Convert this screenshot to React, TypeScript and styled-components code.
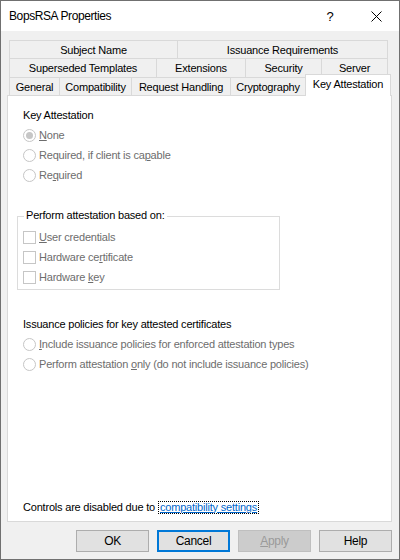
import React from 'react';
import styled, { createGlobalStyle } from 'styled-components';

const Global = createGlobalStyle`
  html, body { margin: 0; padding: 0; background: #ffffff; }
  body {
    font-family: "Liberation Sans", Arial, sans-serif;
    font-size: 11px;
    letter-spacing: -0.2px;
    color: #000;
  }
  * { box-sizing: border-box; }
`;

const Window = styled.div`
  width: 400px;
  height: 560px;
  border: 1px solid #707070;
  display: flex;
  flex-direction: column;
  background: #f0f0f0;
`;

const TitleBar = styled.div`
  height: 30px;
  flex: none;
  background: #ffffff;
  display: flex;
  align-items: center;
  padding-left: 8px;
`;

const TitleText = styled.div`
  flex: 1;
  font-size: 12px;
  letter-spacing: -0.4px;
  line-height: 16px;
`;

const TitleButton = styled.div`
  width: 46px;
  height: 30px;
  display: flex;
  align-items: center;
  justify-content: center;
  font-size: 13px;
  letter-spacing: 0;
  color: #000;
`;

const Body = styled.div`
  flex: 1;
  display: flex;
  flex-direction: column;
  padding: 9px 7px 0 6px;
`;

const TabStrip = styled.div`
  margin-left: 2px;
  width: 379px;
  display: flex;
  flex-direction: column;
`;

const TabRow = styled.div<{ $h: number }>`
  display: flex;
  align-items: flex-start;
  height: ${(p) => p.$h}px;
`;

const Tab = styled.div<{ $w: number; $h: number; $active?: boolean }>`
  flex: none;
  width: ${(p) => p.$w}px;
  height: ${(p) => (p.$active ? p.$h + 4 : p.$h)}px;
  margin-top: ${(p) => (p.$active ? -3 : 0)}px;
  border-top: 1px solid #d9d9d9;
  border-left: 1px solid #d9d9d9;
  border-right: ${(p) => (p.$active ? '1px solid #d9d9d9' : 'none')};
  background: ${(p) => (p.$active ? '#ffffff' : '#f0f0f0')};
  position: ${(p) => (p.$active ? 'relative' : 'static')};
  z-index: ${(p) => (p.$active ? 2 : 'auto')};
  display: flex;
  justify-content: center;
  padding-top: 2px;
  line-height: 15px;
  white-space: nowrap;
  &:last-child {
    border-right: 1px solid #d9d9d9;
  }
`;

const Panel = styled.div`
  width: 385px;
  height: 427px;
  flex: none;
  background: #ffffff;
  border: 1px solid #d9d9d9;
  display: flex;
  flex-direction: column;
  padding: 9px 0 4px 0;
`;

const Section = styled.div`
  padding-left: 15px;
  display: flex;
  flex-direction: column;
`;

const Heading = styled.div<{ $mt?: number }>`
  height: 20px;
  line-height: 20px;
  margin-top: ${(p) => p.$mt ?? 0}px;
  color: #000;
`;

const OptionRow = styled.div`
  height: 20px;
  display: flex;
  align-items: center;
  gap: 3px;
  color: #6d6d6d;
  white-space: nowrap;
`;

const Radio = styled.span<{ $checked?: boolean }>`
  width: 13px;
  height: 13px;
  flex: none;
  border-radius: 50%;
  border: 1px solid #c6c6c6;
  background: #ffffff;
  display: flex;
  align-items: center;
  justify-content: center;
  &::after {
    content: '';
    display: ${(p) => (p.$checked ? 'block' : 'none')};
    width: 7px;
    height: 7px;
    border-radius: 50%;
    background: #c6c6c6;
  }
`;

const Check = styled.span`
  width: 13px;
  height: 13px;
  flex: none;
  border: 1px solid #c6c6c6;
  background: #ffffff;
`;

const Key = styled.span`
  text-decoration: underline;
`;

const GroupBox = styled.div`
  position: relative;
  margin: 31px 0 0 9px;
  width: 263px;
  height: 74px;
  border: 1px solid #dcdcdc;
  padding: 10px 0 0 5px;
  display: flex;
  flex-direction: column;
`;

const GroupLabel = styled.span`
  position: absolute;
  top: -9px;
  left: 6px;
  padding: 0 2px;
  line-height: 15px;
  background: #ffffff;
  color: #000;
`;

const Note = styled.div`
  margin-top: auto;
  padding-left: 15px;
  height: 20px;
  display: flex;
  align-items: center;
  white-space: nowrap;
`;

const Link = styled.span`
  margin-left: 3px;
  color: #0066cc;
  text-decoration: underline;
  border: 1px dotted #000;
  padding: 0 1px;
  line-height: 11px;
`;

const ButtonRow = styled.div`
  margin-top: 8px;
  display: flex;
  justify-content: flex-end;
  gap: 8px;
`;

const Button = styled.div<{ $variant?: 'default' | 'disabled' }>`
  width: 73px;
  height: 22px;
  display: flex;
  align-items: center;
  justify-content: center;
  font-size: 12px;
  letter-spacing: -0.3px;
  background: ${(p) => (p.$variant === 'disabled' ? '#cccccc' : '#e1e1e1')};
  border: ${(p) =>
    p.$variant === 'default'
      ? '2px solid #0078d7'
      : p.$variant === 'disabled'
      ? '1px solid #bfbfbf'
      : '1px solid #adadad'};
  color: ${(p) => (p.$variant === 'disabled' ? '#9a9a9a' : '#000')};
`;

const tabRows: { h: number; tabs: { label: string; w: number; active?: boolean }[] }[] = [
  {
    h: 18,
    tabs: [
      { label: 'Subject Name', w: 168 },
      { label: 'Issuance Requirements', w: 211 },
    ],
  },
  {
    h: 19,
    tabs: [
      { label: 'Superseded Templates', w: 147 },
      { label: 'Extensions', w: 89 },
      { label: 'Security', w: 76 },
      { label: 'Server', w: 67 },
    ],
  },
  {
    h: 18,
    tabs: [
      { label: 'General', w: 50 },
      { label: 'Compatibility', w: 72 },
      { label: 'Request Handling', w: 99 },
      { label: 'Cryptography', w: 75 },
      { label: 'Key Attestation', w: 86, active: true },
    ],
  },
];

export default function App() {
  return (
    <>
      <Global />
      <Window>
        <TitleBar>
          <TitleText>BopsRSA Properties</TitleText>
          <TitleButton>?</TitleButton>
          <TitleButton>
            <svg width="11" height="11" viewBox="0 0 11 11">
              <path d="M0.5 0.5 L10.5 10.5 M10.5 0.5 L0.5 10.5" stroke="#000" strokeWidth="1" fill="none" />
            </svg>
          </TitleButton>
        </TitleBar>
        <Body>
          <TabStrip>
            {tabRows.map((row, i) => (
              <TabRow key={i} $h={row.h}>
                {row.tabs.map((t) => (
                  <Tab key={t.label} $w={t.w} $h={row.h} $active={t.active}>
                    {t.label}
                  </Tab>
                ))}
              </TabRow>
            ))}
          </TabStrip>
          <Panel>
            <Section>
              <Heading>Key Attestation</Heading>
              <OptionRow>
                <Radio $checked />
                <span><Key>N</Key>one</span>
              </OptionRow>
              <OptionRow>
                <Radio />
                <span>Required, if client is ca<Key>p</Key>able</span>
              </OptionRow>
              <OptionRow>
                <Radio />
                <span>Re<Key>q</Key>uired</span>
              </OptionRow>
            </Section>
            <GroupBox>
              <GroupLabel>Perform attestation based on:</GroupLabel>
              <OptionRow>
                <Check />
                <span><Key>U</Key>ser credentials</span>
              </OptionRow>
              <OptionRow>
                <Check />
                <span>Hardware ce<Key>r</Key>tificate</span>
              </OptionRow>
              <OptionRow>
                <Check />
                <span>Hardware <Key>k</Key>ey</span>
              </OptionRow>
            </GroupBox>
            <Section>
              <Heading $mt={24}>Issuance policies for key attested certificates</Heading>
              <OptionRow>
                <Radio />
                <span><Key>I</Key>nclude issuance policies for enforced attestation types</span>
              </OptionRow>
              <OptionRow>
                <Radio />
                <span>Perform attestation <Key>o</Key>nly (do not include issuance policies)</span>
              </OptionRow>
            </Section>
            <Note>
              Controls are disabled due to
              <Link>compatibility settings</Link>
            </Note>
          </Panel>
          <ButtonRow>
            <Button>OK</Button>
            <Button $variant="default">Cancel</Button>
            <Button $variant="disabled"><span><Key>A</Key>pply</span></Button>
            <Button>Help</Button>
          </ButtonRow>
        </Body>
      </Window>
    </>
  );
}
